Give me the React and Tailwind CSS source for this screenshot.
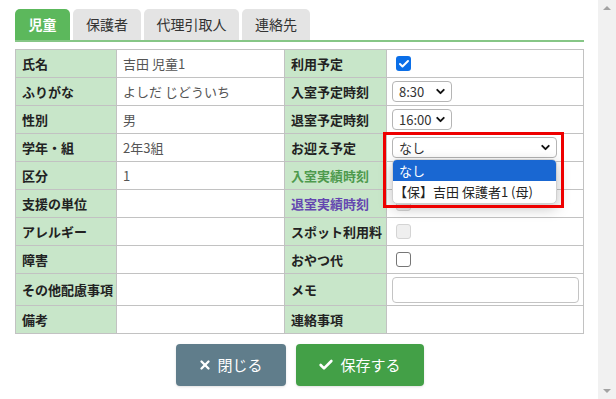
import { X, Check, ChevronDown } from "lucide-react";

const left = [
  ["氏名", "吉田 児童1"],
  ["ふりがな", "よしだ じどういち"],
  ["性別", "男"],
  ["学年・組", "2年3組"],
  ["区分", "1"],
  ["支援の単位", ""],
  ["アレルギー", ""],
  ["障害", ""],
  ["その他配慮事項", ""],
  ["備考", ""],
];

function CheckBox({ checked, disabled }) {
  if (checked) {
    return (
      <div className="ml-[4px] w-[15px] h-[15px] rounded-[3px] bg-[#0b6fe8] flex items-center justify-center">
        <Check size={12} strokeWidth={4} className="text-white" />
      </div>
    );
  }
  return (
    <div
      className={`ml-[4px] w-[15px] h-[15px] rounded-[3px] border ${
        disabled ? "border-[#d4d4d4] bg-[#efefef]" : "border-[#767676] bg-white"
      }`}
    />
  );
}

function Select({ value, width }) {
  return (
    <div
      className={`${width} h-[21px] border border-[#b5b5b5] rounded-[4px] bg-white flex items-center justify-between pl-[6px] pr-[4px] text-[13px] text-[#333]`}
    >
      <span>{value}</span>
      <ChevronDown size={13} strokeWidth={3.5} className="text-[#111]" />
    </div>
  );
}

export default function App() {
  const right = [
    { label: "利用予定", cell: <CheckBox checked /> },
    { label: "入室予定時刻", cell: <Select value="8:30" width="w-[60px]" /> },
    { label: "退室予定時刻", cell: <Select value="16:00" width="w-[60px]" /> },
    { label: "お迎え予定", cell: null, pickup: true },
    { label: "入室実績時刻", color: "text-[#4e9a4e]", cell: <CheckBox disabled /> },
    { label: "退室実績時刻", color: "text-[#6447b0]", cell: <CheckBox disabled /> },
    { label: "スポット利用料", cell: <CheckBox disabled /> },
    { label: "おやつ代", cell: <CheckBox /> },
    {
      label: "メモ",
      tall: true,
      cell: <div className="w-[187px] h-[26px] border border-[#c4c4c4] rounded-[4px] bg-white" />,
    },
    { label: "連絡事項", cell: null },
  ];

  return (
    <div
      className="w-[616px] h-[399px] bg-white flex overflow-hidden text-[#333]"
      style={{ fontFamily: '"Noto Sans CJK JP", "Noto Sans", sans-serif' }}
    >
      <div className="flex-1 pl-[15px] pr-[14px] pt-[9px]">
        {/* Tabs */}
        <div className="flex items-end gap-[3px] border-b-2 border-[#86c686]">
          <div className="w-[55px] h-[31px] rounded-t-[5px] bg-[#5cb85c] text-white font-bold text-[14px] flex items-center justify-center">
            児童
          </div>
          <div className="w-[68px] h-[31px] rounded-t-[5px] bg-[#e4e4e4] text-[14px] flex items-center justify-center">
            保護者
          </div>
          <div className="w-[95px] h-[31px] rounded-t-[5px] bg-[#e4e4e4] text-[14px] flex items-center justify-center">
            代理引取人
          </div>
          <div className="w-[68px] h-[31px] rounded-t-[5px] bg-[#e4e4e4] text-[14px] flex items-center justify-center">
            連絡先
          </div>
        </div>

        {/* Table */}
        <table className="mt-[7px] w-[569px] border-collapse text-[13px] table-fixed">
          <colgroup>
            <col className="w-[101px]" />
            <col className="w-[168px]" />
            <col className="w-[102px]" />
            <col />
          </colgroup>
          <tbody>
            {left.map(([label, value], i) => {
              const r = right[i];
              return (
                <tr key={label} className={r.tall ? "h-[32px]" : "h-[28px]"}>
                  <td className="border border-[#c2c2c2] bg-[#c8e6c9] font-bold pl-[6px] pr-0 whitespace-nowrap overflow-hidden text-[#222]">
                    {label}
                  </td>
                  <td className="border border-[#c2c2c2] px-[6px] text-[#555]">{value}</td>
                  <td className={`border border-[#c2c2c2] bg-[#c8e6c9] font-bold pl-[6px] pr-0 whitespace-nowrap ${r.color || "text-[#222]"}`}>
                    {r.label}
                  </td>
                  <td className="border border-[#c2c2c2] pl-[5px] pr-[5px] relative">
                    {r.pickup ? (
                      <div className="relative">
                        <Select value="なし" width="w-[165px]" />
                        <div className="absolute left-[-9px] top-[-5px] w-[181px] h-[76px] border-[3px] border-[#ee0000] z-20" />
                        <div className="absolute left-0 top-[22px] w-[165px] bg-white rounded-[5px] shadow-[0_4px_14px_rgba(0,0,0,0.25)] border border-[#d0d0d0] overflow-hidden z-10 text-[13px]">
                          <div className="h-[21px] bg-[#1967d2] text-white flex items-center pl-[6px]">なし</div>
                          <div className="h-[22px] flex items-center pl-[1px] text-[#222]">【保】吉田 保護者1 (母)</div>
                        </div>
                      </div>
                    ) : (
                      r.cell
                    )}
                  </td>
                </tr>
              );
            })}
          </tbody>
        </table>

        {/* Buttons */}
        <div className="flex justify-center gap-[10px] mt-[10px]">
          <button className="w-[110px] h-[42px] rounded-[4px] bg-[#607d8b] text-white text-[15px] flex items-center justify-center gap-[5px] shadow-sm">
            <X size={14} strokeWidth={4} />
            閉じる
          </button>
          <button className="w-[128px] h-[42px] rounded-[4px] bg-[#43a047] text-white text-[15px] flex items-center justify-center gap-[6px] shadow-sm">
            <Check size={16} strokeWidth={4} />
            保存する
          </button>
        </div>
      </div>

      {/* Scrollbar */}
      <div className="w-[19px] h-full bg-[#f1f1f1] flex flex-col items-center justify-between py-[6px]">
        <div className="w-0 h-0 border-l-[4px] border-r-[4px] border-b-[4px] border-l-transparent border-r-transparent border-b-[#a3a3a3]" />
        <div className="w-0 h-0 border-l-[4px] border-r-[4px] border-t-[4px] border-l-transparent border-r-transparent border-t-[#a3a3a3]" />
      </div>
    </div>
  );
}
